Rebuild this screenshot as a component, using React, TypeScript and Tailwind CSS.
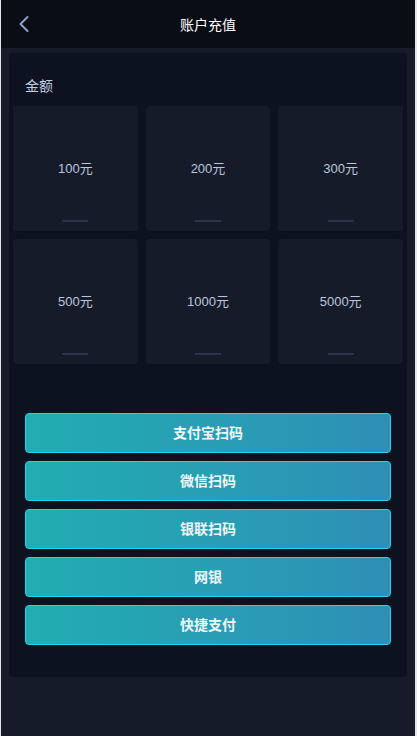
import { ChevronLeft } from "lucide-react";

const amounts = ["100元", "200元", "300元", "500元", "1000元", "5000元"];
const methods = ["支付宝扫码", "微信扫码", "银联扫码", "网银", "快捷支付"];

const font = { fontFamily: '"Liberation Sans", "Noto Sans CJK SC", sans-serif' };

export default function App() {
  return (
    <div className="flex min-h-[736px] w-full bg-[#e6e6e6]" style={font}>
      <div className="ml-px mr-[2px] flex flex-1 flex-col bg-[#161b29]">
        <header className="relative flex h-12 items-center justify-center bg-[#0a0d16]">
          <button className="absolute left-[9px] top-[10px] text-[#8fa3c8]">
            <ChevronLeft size={28} strokeWidth={1.7} />
          </button>
          <h1 className="pt-px text-sm text-white">账户充值</h1>
        </header>

        <main className="mx-2 mt-[5px] rounded bg-[#0c1220] px-1 pb-8">
          <div className="px-3 pt-[23px] pb-[10px] text-sm text-[#c5cfe2]">金额</div>
          <div className="grid grid-cols-3 gap-2">
            {amounts.map((a) => (
              <div key={a} className="relative flex h-[125px] items-center justify-center rounded bg-[#161b29]">
                <span className="text-[13px] text-[#b9c6de]">{a}</span>
                <span className="absolute bottom-[9px] left-1/2 h-[2px] w-[26px] -translate-x-1/2 bg-[#2c3448]" />
              </div>
            ))}
          </div>

          <div className="mt-[49px] flex flex-col gap-2 px-3">
            {methods.map((m) => (
              <button
                key={m}
                className="h-10 rounded border border-[#2ad4ee] bg-gradient-to-r from-[#21adb1] to-[#2e8fb6] text-sm font-bold text-[#f2f6fa]"
              >
                {m}
              </button>
            ))}
          </div>
        </main>
      </div>
    </div>
  );
}
